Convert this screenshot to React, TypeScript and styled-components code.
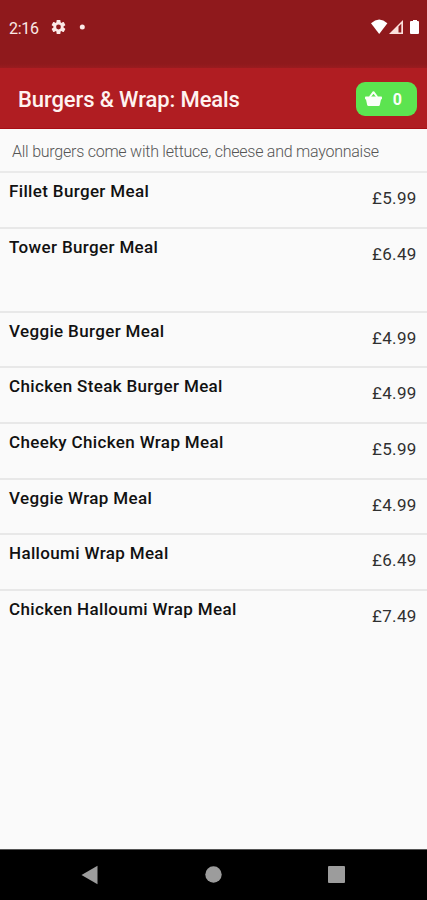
import React from "react";
import styled, { createGlobalStyle } from "styled-components";

const GlobalStyle = createGlobalStyle`
  * { box-sizing: border-box; }
  body { margin: 0; background: #fafafa; font-family: Roboto, "Liberation Sans", sans-serif; }
`;

const Screen = styled.div`
  width: 427px;
  height: 900px;
  display: flex;
  flex-direction: column;
  overflow: hidden;
  background: #fafafa;
`;

const StatusBar = styled.div`
  height: 68px;
  flex: none;
  display: flex;
  align-items: flex-start;
  padding: 17px 7px 0 9px;
  background: linear-gradient(#8f191c 0 64px, #9a1b1f 68px);
  color: #fbe9e7;
`;

const Clock = styled.span`
  width: 42px;
  padding-top: 1px;
  font-size: 16px;
  line-height: 22px;
  letter-spacing: -0.3px;
`;

const StatusIcon = styled.svg<{ $gap?: number }>`
  display: block;
  flex: none;
  overflow: visible;
  margin-left: ${(p) => p.$gap ?? 0}px;
`;

const Spacer = styled.div`
  flex: 1;
`;

const AppBar = styled.header`
  height: 61px;
  flex: none;
  display: flex;
  align-items: center;
  justify-content: space-between;
  padding: 2px 10px 0 18px;
  background: #b01d22;
  border-bottom: 1px solid #a80d14;
`;

const Title = styled.h1`
  margin: 0;
  padding-top: 2px;
  font-size: 22px;
  line-height: 28px;
  font-weight: 500;
  letter-spacing: -0.1px;
  color: #fff3f0;
  white-space: nowrap;
`;

const BasketButton = styled.button`
  width: 61px;
  height: 34px;
  border: 0;
  border-radius: 9px;
  padding: 0 15px 0 9px;
  display: flex;
  align-items: center;
  justify-content: space-between;
  background: #5ce450;
  color: #fafff8;
  font: 700 16px/20px Roboto, "Liberation Sans", sans-serif;
`;

const BasketCount = styled.span`
  padding-top: 2px;
`;

const Note = styled.p`
  margin: 0;
  height: 44px;
  flex: none;
  padding: 12px 0 0 12px;
  border-bottom: 2px solid #eaeaea;
  font-size: 16px;
  line-height: 21px;
  font-weight: 300;
  letter-spacing: -0.24px;
  color: #555;
  white-space: nowrap;
`;

const MenuList = styled.ul`
  flex: 1;
  margin: 0;
  padding: 0;
  list-style: none;
`;

const MenuRow = styled.li<{ $height: number }>`
  height: ${(p) => p.$height}px;
  display: flex;
  justify-content: space-between;
  align-items: flex-start;
  padding: 8px 11px 0 9px;
  border-bottom: 2px solid #e8e8e8;
  &:last-child { border-bottom: 0; }
`;

const ItemName = styled.span`
  font-size: 17px;
  line-height: 20px;
  font-weight: 500;
  letter-spacing: 0.35px;
  color: #111;
  white-space: nowrap;
`;

const Price = styled.span`
  margin-top: 6px;
  font-size: 17px;
  line-height: 22px;
  letter-spacing: 0.3px;
  margin-right: -0.6px;
  color: #303030;
`;

const NavBar = styled.nav`
  height: 51px;
  flex: none;
  display: flex;
  justify-content: space-between;
  align-items: center;
  padding: 0 82px 1px 81px;
  background: #000;
  border-top: 1px solid #555;
`;

const items = [
  { name: "Fillet Burger Meal", price: "£5.99", height: 55.8 },
  { name: "Tower Burger Meal", price: "£6.49", height: 84 },
  { name: "Veggie Burger Meal", price: "£4.99", height: 55.65 },
  { name: "Chicken Steak Burger Meal", price: "£4.99", height: 55.65 },
  { name: "Cheeky Chicken Wrap Meal", price: "£5.99", height: 55.65 },
  { name: "Veggie Wrap Meal", price: "£4.99", height: 55.65 },
  { name: "Halloumi Wrap Meal", price: "£6.49", height: 55.65 },
  { name: "Chicken Halloumi Wrap Meal", price: "£7.49", height: 55.65 },
];

export default function App() {
  return (
    <Screen>
      <GlobalStyle />
      <StatusBar>
        <Clock>2:16</Clock>
        <StatusIcon width="16" height="20" viewBox="0 0 16 20">
          <g fill="currentColor" transform="translate(7.5 10)">
            {[0, 60, 120].map((angle) => (
              <rect key={angle} x="-2" y="-7" width="4" height="14" rx="0.7" transform={`rotate(${angle})`} />
            ))}
            <circle r="5.1" />
          </g>
          <circle cx="7.5" cy="10" r="2.4" fill="#8f191c" />
        </StatusIcon>
        <StatusIcon width="6" height="20" $gap={12}>
          <circle cx="3.3" cy="10" r="2.5" fill="currentColor" />
        </StatusIcon>
        <Spacer />
        <StatusIcon width="17" height="20" viewBox="0 0 17 20">
          <path d="M0 6.3Q8.2 -1.1 16.4 6.3L8.2 17Z" fill="#fff" />
        </StatusIcon>
        <StatusIcon width="14" height="20" viewBox="0 0 14 20" $gap={1}>
          <path d="M0 17L14 3V17Z" fill="#fbe0dc" />
          <path d="M9.5 9.5L12.3 6.7V15.5H9.5Z" fill="#8f191c" />
        </StatusIcon>
        <StatusIcon width="10" height="20" viewBox="0 0 10 20" $gap={7}>
          <path d="M1 4H3V3H7V4H8Q9 4 9 5V16Q9 17 8 17H1Q0 17 0 16V5Q0 4 1 4Z" fill="#fff" />
        </StatusIcon>
      </StatusBar>
      <AppBar>
        <Title>Burgers &amp; Wrap: Meals</Title>
        <BasketButton aria-label="Basket, 0 items">
          <StatusIcon width="17" height="17" viewBox="0 0 17 17">
            <path d="M0.8 5.5H16.2Q17 5.5 17 6.5V7.5Q17 8.5 16 8.5L14.8 14Q14.6 15 13.5 15H3.5Q2.4 15 2.2 14L1 8.5Q0 8.5 0 7.5V6.5Q0 5.5 .8 5.5Z" fill="currentColor" />
            <path d="M4.8 6L8.5 1.2L12.2 6" fill="none" stroke="currentColor" strokeWidth="2" strokeLinejoin="round" />
          </StatusIcon>
          <BasketCount>0</BasketCount>
        </BasketButton>
      </AppBar>
      <Note>All burgers come with lettuce, cheese and mayonnaise</Note>
      <MenuList>
        {items.map((item) => (
          <MenuRow key={item.name} $height={item.height}>
            <ItemName>{item.name}</ItemName>
            <Price>{item.price}</Price>
          </MenuRow>
        ))}
      </MenuList>
      <NavBar>
        <StatusIcon width="17" height="20" viewBox="0 0 17 20">
          <path d="M.5 10L16.5 .8V19.2Z" fill="#9c9c9c" />
        </StatusIcon>
        <StatusIcon width="17" height="17" viewBox="0 0 17 17">
          <circle cx="8.5" cy="8.5" r="8.2" fill="#9c9c9c" />
        </StatusIcon>
        <StatusIcon width="17" height="17" viewBox="0 0 17 17">
          <rect width="17" height="17" rx="1" fill="#9c9c9c" />
        </StatusIcon>
      </NavBar>
    </Screen>
  );
}
